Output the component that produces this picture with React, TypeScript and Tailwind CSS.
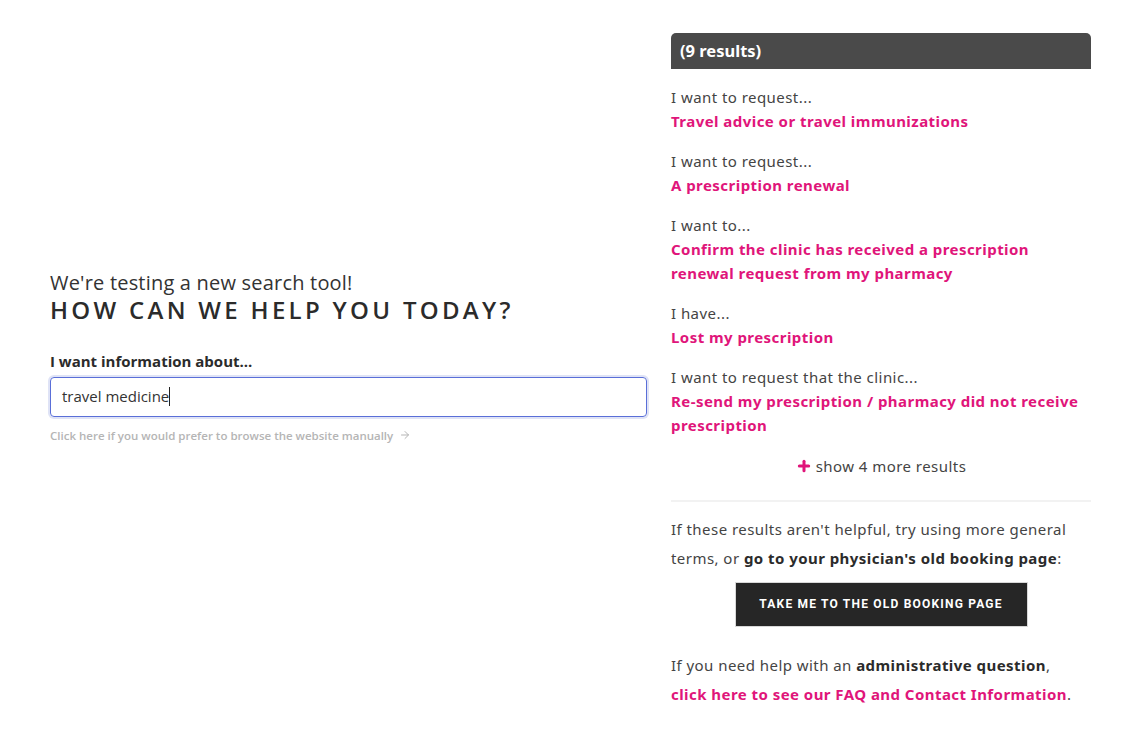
import { Plus, ArrowRight } from "lucide-react";

const results = [
  { pre: "I want to request...", link: "Travel advice or travel immunizations" },
  { pre: "I want to request...", link: "A prescription renewal" },
  { pre: "I want to...", link: "Confirm the clinic has received a prescription renewal request from my pharmacy" },
  { pre: "I have...", link: "Lost my prescription" },
  { pre: "I want to request that the clinic...", link: "Re-send my prescription / pharmacy did not receive prescription" },
];

export default function App() {
  return (
    <div className="min-h-screen bg-white text-[#3a3a3a] font-['Open_Sans',sans-serif]">
      <div className="flex items-center gap-6 pl-[50px] pt-[33px] pb-6">
        {/* search side */}
        <div className="w-[597px] pb-[27px]">
          <p className="text-[20px] leading-[24px] font-normal tracking-[0.2px] text-[#333]">We're testing a new search tool!</p>
          <h1 className="text-[24px] leading-[30px] font-semibold tracking-[3.3px] text-[#2b2b2b]">HOW CAN WE HELP YOU TODAY?</h1>
          <label className="block mt-[26px] text-[15px] font-bold leading-[20px] text-[#2b2b2b]">I want information about...</label>
          <div className="mt-[6px] h-[40px] rounded-[4px] border border-[#5a6fd8] ring-2 ring-[#dfe3f6] flex items-center px-[11px] text-[15px] text-[#333]">
            travel medicine<span className="inline-block w-px h-[19px] bg-[#222]" />
          </div>
          <a className="mt-[10px] flex items-center gap-[6px] text-[11.5px] font-semibold text-[#b5b5b5]">
            Click here if you would prefer to browse the website manually
            <ArrowRight size={12} strokeWidth={2} />
          </a>
        </div>

        {/* results side */}
        <div className="w-[420px] font-['Noto_Sans',sans-serif] tracking-[0.45px]">
          <div className="h-[36px] bg-[#4a4a4a] rounded-t-[5px] px-[9px] flex items-center text-white text-[16.5px] font-bold tracking-normal">
            (9 results)
          </div>
          <div className="mt-[16px] flex flex-col gap-[16px]">
            {results.map((r, i) => (
              <div key={i} className="leading-[24px]">
                <div className="text-[15px] text-[#444]">{r.pre}</div>
                <a className="block text-[15px] font-bold text-[#e0157a]">{r.link}</a>
              </div>
            ))}
          </div>
          <div className="mt-[18px] flex items-center justify-center gap-[4px] text-[15px] text-[#444]">
            <Plus size={16} strokeWidth={4.5} className="text-[#e0157a]" />
            show 4 more results
          </div>
          <div className="mt-[22px] border-t-2 border-[#f2f2f2]" />
          <p className="mt-[13px] text-[15px] leading-[29px] text-[#444]">
            If these results aren't helpful, try using more general terms, or{" "}
            <b className="text-[#2b2b2b]">go to your physician's old booking page</b>:
          </p>
          <div className="mt-[9px] flex justify-center">
            <button className="h-[45px] w-[293px] bg-[#262626] border border-[#d8d8d8] text-white text-[12px] font-bold tracking-[1.2px] font-['Roboto',sans-serif]">
              TAKE ME TO THE OLD BOOKING PAGE
            </button>
          </div>
          <p className="mt-[24px] text-[15px] leading-[29px] text-[#444]">
            If you need help with an <b className="text-[#2b2b2b]">administrative question</b>,{" "}
            <a className="whitespace-nowrap font-bold text-[#e0157a]">click here to see our FAQ and Contact Information</a>.
          </p>
        </div>
      </div>
    </div>
  );
}
